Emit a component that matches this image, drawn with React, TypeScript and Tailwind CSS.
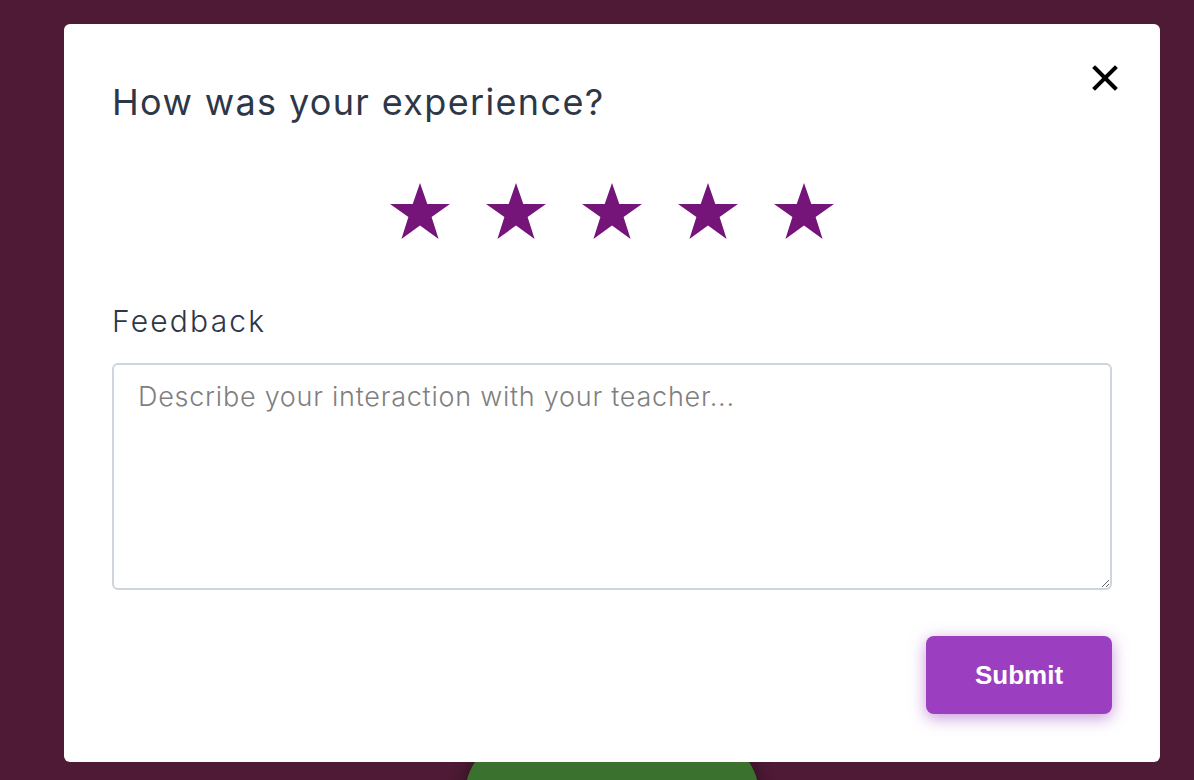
import React from "react";

function Star() {
  return (
    <svg width="62" height="58" viewBox="0 0 62 58" className="block">
      <polygon
        points="31,0 38.3,21 61,21 42.6,34 49.6,56 31,42.6 12.4,56 19.4,34 1,21 23.7,21"
        fill="#751479"
      />
    </svg>
  );
}

export default function App() {
  return (
    <div className="relative h-[780px] w-full overflow-hidden bg-[#4e1a35]">
      {/* button peeking out under the modal */}
      <div className="absolute left-[465px] top-[735px] h-[120px] w-[294px] rounded-full bg-[#3a712e] shadow-[0_0_18px_rgba(0,0,0,0.45)]" />

      <div className="relative ml-[64px] mt-[24px] w-[1096px] h-[738px] rounded-md bg-white px-12 pt-[56px] pb-12 flex flex-col">
        <button className="absolute right-[41px] top-[40px] text-black">
          <svg width="28" height="28" viewBox="0 0 28 28">
            <path d="M4 4 L24 24 M24 4 L4 24" stroke="#000" strokeWidth="4" strokeLinecap="square" />
          </svg>
        </button>

        <h2 className="font-['Inter',sans-serif] text-[36px] leading-[44px] font-normal text-[#2d3748] tracking-[1.35px]">
          How was your experience?
        </h2>

        <div className="mt-[59px] flex justify-center gap-[34px]">
          {[0, 1, 2, 3, 4].map((i) => (
            <Star key={i} />
          ))}
        </div>

        <label className="mt-[62px] font-['Inter',sans-serif] text-[30px] leading-[36px] font-light text-[#2d3748] tracking-[2.2px]">
          Feedback
        </label>

        <textarea
          placeholder="Describe your interaction with your teacher..."
          className="mt-[24px] h-[227px] w-full rounded-md border-2 border-[#cfd5dc] px-6 py-3 font-['Inter',sans-serif] text-[27px] font-light tracking-[0.75px] text-[#2d3748] placeholder:text-[#7f7f7f] outline-none"
        />

        <div className="mt-auto flex justify-end">
          <button className="h-[78px] w-[186px] rounded-lg bg-[#9b3fc0] font-['Liberation_Sans',Arial,sans-serif] text-[26px] font-bold text-white shadow-[0_4px_16px_rgba(155,63,192,0.55)]">
            Submit
          </button>
        </div>
      </div>
    </div>
  );
}
